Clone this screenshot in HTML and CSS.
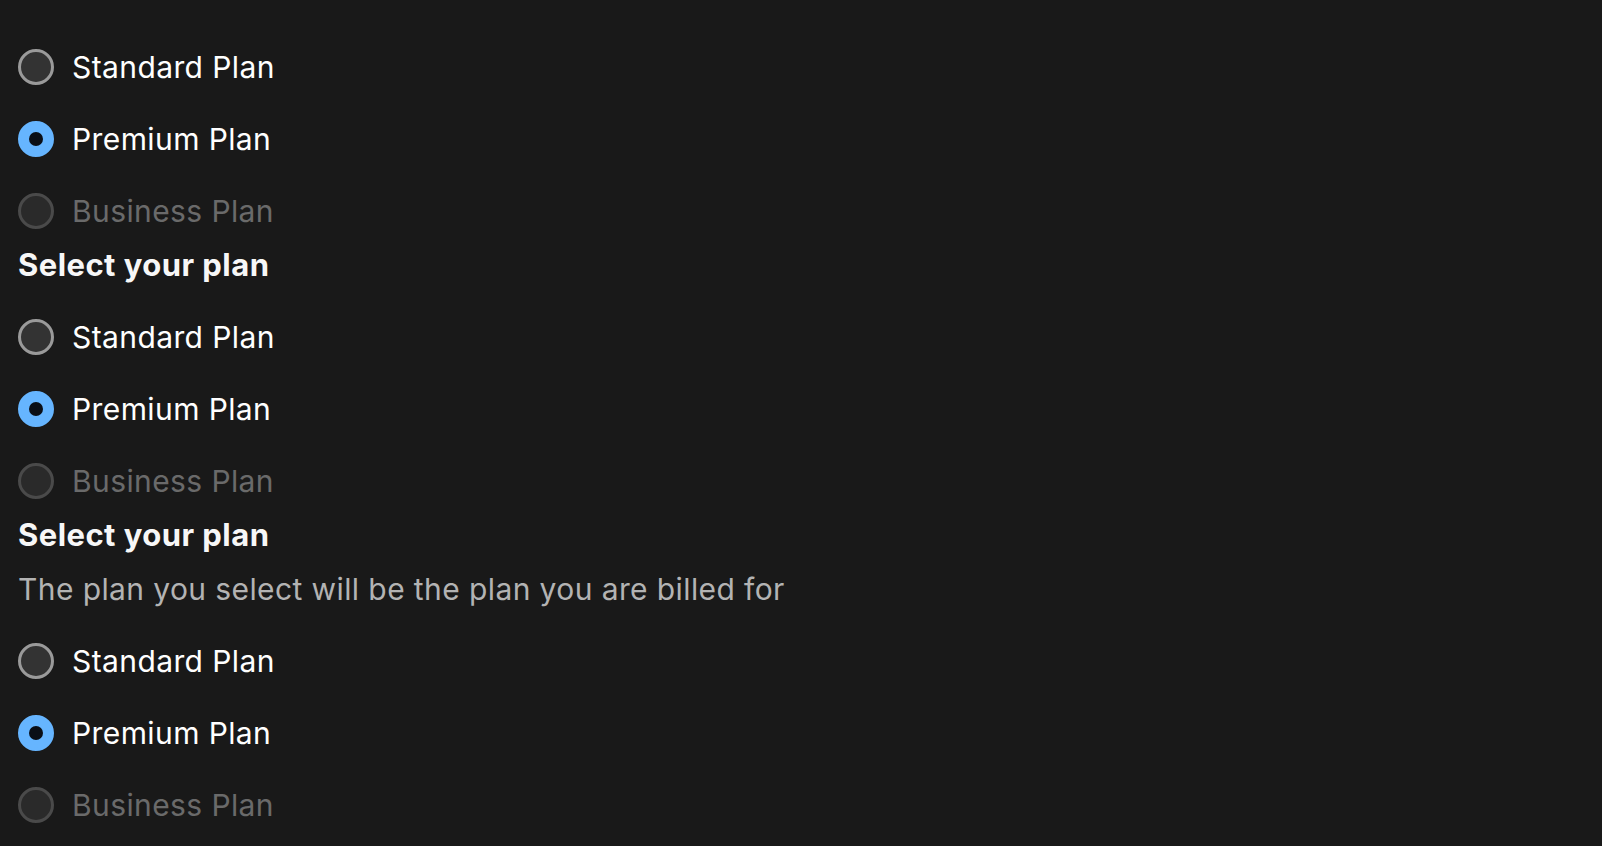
FILE: index.html
```html
<!DOCTYPE html>
<html lang="en">
<head>
<meta charset="utf-8">
<title>Radio groups</title>
<link rel="stylesheet" href="styles.css">
</head>
<body>
<main class="page">
  <div class="group" role="radiogroup">
    <label class="option"><span class="radio"></span><span class="label">Standard Plan</span></label>
    <label class="option"><span class="radio checked"></span><span class="label">Premium Plan</span></label>
    <label class="option disabled"><span class="radio"></span><span class="label">Business Plan</span></label>
  </div>
  <div class="group" role="radiogroup">
    <div class="heading">Select your plan</div>
    <label class="option"><span class="radio"></span><span class="label">Standard Plan</span></label>
    <label class="option"><span class="radio checked"></span><span class="label">Premium Plan</span></label>
    <label class="option disabled"><span class="radio"></span><span class="label">Business Plan</span></label>
  </div>
  <div class="group" role="radiogroup">
    <div class="heading">Select your plan</div>
    <div class="description">The plan you select will be the plan you are billed for</div>
    <label class="option"><span class="radio"></span><span class="label">Standard Plan</span></label>
    <label class="option"><span class="radio checked"></span><span class="label">Premium Plan</span></label>
    <label class="option disabled"><span class="radio"></span><span class="label">Business Plan</span></label>
  </div>
</main>
</body>
</html>
```

FILE: styles.css
```css
html, body {
  margin: 0;
  padding: 0;
  background: #191919;
  height: 100%;
  overflow: hidden;
}

.page {
  padding: 31px 18px 0 18px;
  font-family: Inter, "Noto Sans", sans-serif;
  font-size: 30px;
  letter-spacing: 0.4px;
  color: #ffffff;
  display: flex;
  flex-direction: column;
}

.group {
  display: flex;
  flex-direction: column;
}

.heading {
  font-weight: 700;
  font-size: 31px;
  letter-spacing: 0.45px;
  line-height: 36px;
  margin-bottom: 18px;
  color: #f7f7f7;
}

.description {
  line-height: 36px;
  margin-bottom: 18px;
  color: #b3b3b3;
}

.option {
  display: flex;
  align-items: center;
  gap: 18px;
  height: 72px;
}

.radio {
  box-sizing: border-box;
  width: 36px;
  height: 36px;
  border-radius: 50%;
  border: 3px solid #9a9a9a;
  background: #333333;
  flex: none;
  display: flex;
  align-items: center;
  justify-content: center;
}

.radio.checked {
  border-color: #66b5ff;
  background: #66b5ff;
}

.radio.checked::after {
  content: "";
  width: 14px;
  height: 14px;
  border-radius: 50%;
  background: #0a0e16;
}

.label {
  line-height: 36px;
}

.option.disabled .radio {
  border-color: #4a4a4a;
  background: #2a2a2a;
}

.option.disabled .label {
  color: #6a6a6a;
}
```
